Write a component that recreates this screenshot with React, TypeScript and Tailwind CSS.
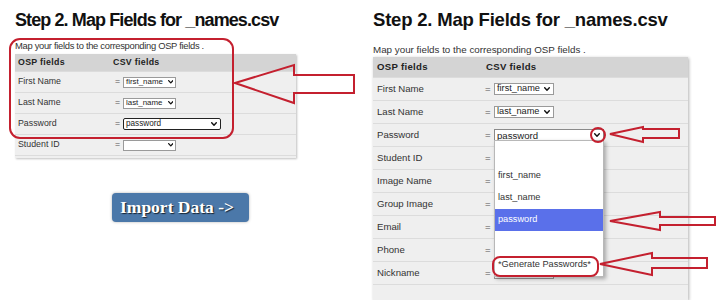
import React from "react";

const Chevron = ({ size = 6 }: { size?: number }) => (
  <svg width={size} height={size * 0.7} viewBox="0 0 6 4.2" className="shrink-0">
    <path d="M0.7 0.7 L3 3.2 L5.3 0.7" fill="none" stroke="#111" strokeWidth="1.4" strokeLinecap="round" strokeLinejoin="round" />
  </svg>
);

function LeftPanel() {
  const rows = [
    { label: "First Name", value: "first_name", wide: false },
    { label: "Last Name", value: "last_name", wide: false },
    { label: "Password", value: "password", wide: true },
    { label: "Student ID", value: "", wide: false },
  ];
  return (
    <div className="flex w-[360px] flex-col pl-[15px]">
      <div className="pt-[10px] text-[18px] font-bold leading-[20px] tracking-[-0.9px] text-[#111]">
        Step 2. Map Fields for _names.csv
      </div>
      <div className="mt-[10px] text-[9.4px] leading-[12px] tracking-[-0.3px] text-[#333]">
        Map your fields to the corresponding OSP fields .
      </div>
      <div className="mt-[2px] w-[281px] bg-[#efefef] text-[8.8px] text-[#333] shadow-[1px_1px_2px_rgba(0,0,0,0.25)]">
        <div className="flex h-[17px] items-center bg-[#d4d4d4] font-bold tracking-[0.3px] text-[#222]">
          <div className="w-[98px] pl-[3px]">OSP fields</div>
          <div>CSV fields</div>
        </div>
        {rows.map((r) => (
          <div key={r.label} className="flex h-[21px] items-center border-t border-[#dcdcdc]">
            <div className="w-[98px] pl-[3px]">{r.label}</div>
            <div className="flex items-center pl-[2px]">
              <span className="w-[8px] text-[#555]">=</span>
              {r.wide ? (
                <div className="flex h-[12px] w-[98px] items-center justify-between rounded-[2px] border border-[#222] bg-white pl-[2px] pr-[3px] text-[8.2px] leading-none text-[#222]">
                  <span>{r.value}</span>
                  <Chevron />
                </div>
              ) : (
                <div className="flex h-[11px] w-[53px] items-center justify-between border border-[#9a9a9a] bg-white pl-[2px] pr-[2px] text-[7.9px] leading-none text-[#222]">
                  <span>{r.value}</span>
                  <Chevron size={5.5} />
                </div>
              )}
            </div>
          </div>
        ))}
        <div className="h-[3px] border-t border-[#dcdcdc]" />
      </div>
      <div className="mt-[35px] flex w-[330px] justify-center">
        <div className="flex h-[29px] w-[137px] items-center justify-center rounded-[4px] bg-[#4b78a9] pr-[6px] font-['Liberation_Serif',serif] text-[17.5px] font-bold text-white shadow-[0_0_3px_rgba(0,0,0,0.3)] [text-shadow:1px_1px_1px_rgba(0,0,0,0.7)]">
          Import Data -&gt;
        </div>
      </div>
    </div>
  );
}

function RightPanel() {
  const rows = [
    { label: "First Name", value: "first_name", kind: "small" },
    { label: "Last Name", value: "last_name", kind: "small" },
    { label: "Password", value: "password", kind: "open" },
    { label: "Student ID", value: "", kind: "small" },
    { label: "Image Name", value: "", kind: "small" },
    { label: "Group Image", value: "", kind: "small" },
    { label: "Email", value: "", kind: "small" },
    { label: "Phone", value: "", kind: "small" },
    { label: "Nickname", value: "", kind: "small" },
  ];
  return (
    <div className="flex flex-col pl-[13px]">
      <div className="pt-[10px] text-[18.5px] font-bold leading-[20px] tracking-[-0.2px] text-[#111]">
        Step 2. Map Fields for _names.csv
      </div>
      <div className="mt-[14px] text-[9.8px] leading-[12px] text-[#333]">
        Map your fields to the corresponding OSP fields .
      </div>
      <div className="mt-[1px] w-[315px] bg-[#efefef] text-[9.6px] text-[#333] shadow-[1px_1px_3px_rgba(0,0,0,0.3)]">
        <div className="flex h-[20px] items-center bg-[#d4d4d4] font-bold tracking-[0.3px] text-[#222]">
          <div className="w-[111px] pl-[4px]">OSP fields</div>
          <div className="pl-[2px]">CSV fields</div>
        </div>
        {rows.map((r) => (
          <div key={r.label} className="flex h-[23px] items-center border-t border-[#dcdcdc]">
            <div className="w-[111px] pl-[4px]">{r.label}</div>
            <div className="flex items-center">
              <span className="w-[10px] pl-[1px] text-[#555]">=</span>
              {r.kind === "open" ? (
                <div className="flex h-[12px] w-[110px] items-center justify-between border border-b-0 border-[#8a8a8a] bg-white pl-[2px] pr-[3px] text-[9.6px] leading-none text-[#222]">
                  <span>{r.value}</span>
                  <Chevron />
                </div>
              ) : (
                <div className="flex h-[12px] w-[60px] items-center justify-between border border-[#9a9a9a] bg-white pl-[2px] pr-[3px] text-[9.2px] leading-none text-[#222]">
                  <span>{r.value}</span>
                  <Chevron />
                </div>
              )}
            </div>
          </div>
        ))}
        <div className="h-[16px] border-t border-[#dcdcdc]" />
      </div>
    </div>
  );
}

function Dropdown() {
  const items = ["", "first_name", "last_name", "password", "", "*Generate Passwords*"];
  return (
    <div className="absolute left-[494px] top-[140px] flex h-[137px] w-[110px] flex-col border border-[#b8b8b8] bg-white pt-[1px] shadow-[2px_2px_4px_rgba(0,0,0,0.3)]">
      {items.map((it, i) => (
        <div
          key={i}
          className={
            it === "password"
              ? "flex h-[22.5px] items-center bg-[#5a70ea] pl-[3px] text-[9.2px] text-white"
              : "flex h-[22.5px] items-center pl-[3px] text-[9.2px] text-[#333]"
          }
        >
          {it}
        </div>
      ))}
    </div>
  );
}

export default function App() {
  const red = "#c4202f";
  return (
    <div className="relative flex h-[300px] w-[728px] overflow-hidden bg-white font-['Liberation_Sans',Arial,sans-serif]">
      <LeftPanel />
      <RightPanel />
      <Dropdown />
      <svg className="pointer-events-none absolute left-0 top-0" width="728" height="300" viewBox="0 0 728 300">
        <rect x="10" y="39" width="223" height="99" rx="10" fill="none" stroke={red} strokeWidth="2" />
        <polygon points="235,83 294,65 294,75 354,75 354,93 294,93 294,103" fill="none" stroke={red} strokeWidth="2" strokeLinejoin="miter" />
        <circle cx="598" cy="135" r="7" fill="none" stroke={red} strokeWidth="2" />
        <polygon points="610,134 643,127 643,129 679,129 679,138 643,138 643,142" fill="none" stroke={red} strokeWidth="2" />
        <polygon points="610,221 660,212 660,217 715,217 715,225 660,225 660,230" fill="none" stroke={red} strokeWidth="2" />
        <polygon points="600,264 652,253 652,258 707,258 707,268 652,268 652,275" fill="none" stroke={red} strokeWidth="2" />
        <rect x="493" y="257" width="105" height="19" rx="7" fill="none" stroke={red} strokeWidth="2" />
      </svg>
    </div>
  );
}
